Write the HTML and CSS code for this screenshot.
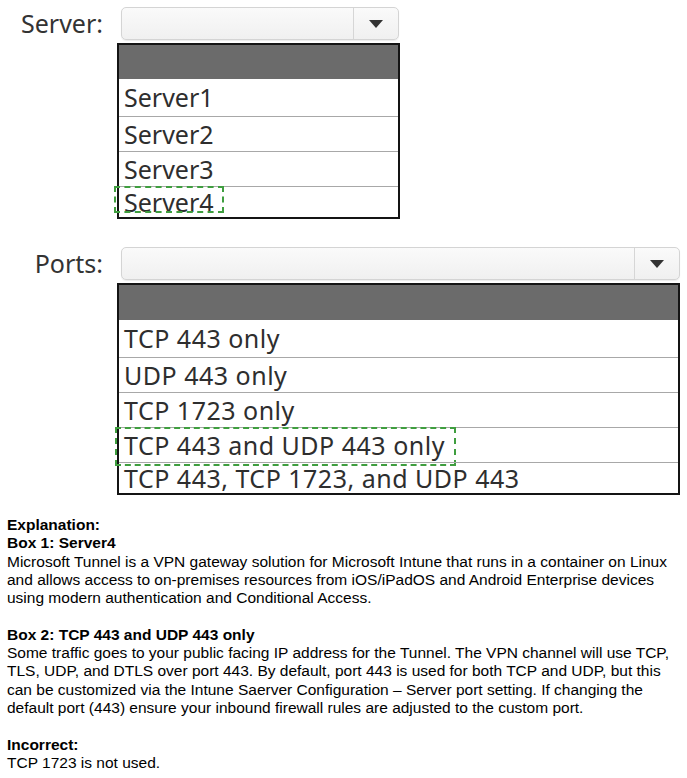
FILE: index.html
```html
<!DOCTYPE html>
<html>
<head>
<meta charset="utf-8">
<link rel="stylesheet" href="styles.css">
</head>
<body>
<div class="page">
  <section class="field server">
    <div class="label">Server:</div>
    <div class="control">
      <div class="select">
        <div class="select-value"></div>
        <div class="select-btn"><svg width="14" height="8" viewBox="0 0 14 8"><path d="M0 0H14L7 8Z" fill="#333"/></svg></div>
      </div>
      <div class="listbox">
        <div class="lb-head"></div>
        <div class="lb-row">Server1</div>
        <div class="lb-row">Server2</div>
        <div class="lb-row">Server3</div>
        <div class="lb-row">Server4<span class="answer a1"></span></div>
      </div>
    </div>
  </section>
  <section class="field ports">
    <div class="label">Ports:</div>
    <div class="control">
      <div class="select">
        <div class="select-value"></div>
        <div class="select-btn"><svg width="14" height="8" viewBox="0 0 14 8"><path d="M0 0H14L7 8Z" fill="#333"/></svg></div>
      </div>
      <div class="listbox">
        <div class="lb-head"></div>
        <div class="lb-row">TCP 443 only</div>
        <div class="lb-row">UDP 443 only</div>
        <div class="lb-row">TCP 1723 only</div>
        <div class="lb-row">TCP 443 and UDP 443 only<span class="answer a2"></span></div>
        <div class="lb-row">TCP 443, TCP 1723, and UDP 443</div>
      </div>
    </div>
  </section>
  <div class="explain">
    <p><b>Explanation:</b><br><b>Box 1: Server4</b><br>Microsoft Tunnel is a VPN gateway solution for Microsoft Intune that runs in a container on Linux<br>and allows access to on-premises resources from iOS/iPadOS and Android Enterprise devices<br>using modern authentication and Conditional Access.</p>
    <p><b>Box 2: TCP 443 and UDP 443 only</b><br>Some traffic goes to your public facing IP address for the Tunnel. The VPN channel will use TCP,<br>TLS, UDP, and DTLS over port 443. By default, port 443 is used for both TCP and UDP, but this<br>can be customized via the Intune Saerver Configuration – Server port setting. If changing the<br>default port (443) ensure your inbound firewall rules are adjusted to the custom port.</p>
    <p><b>Incorrect:</b><br>TCP 1723 is not used.</p>
  </div>
</div>
</body>
</html>
```
FILE: styles.css
```css
html, body { margin: 0; padding: 0; background: #fff; }
.page { width: 687px; }
.field { display: flex; align-items: flex-start; }
.field.server { padding-top: 7px; }
.field.ports { padding-top: 28px; }
.label {
  width: 103px; text-align: right;
  font-family: "Noto Sans", sans-serif; font-size: 25px; color: #333;
  line-height: 33px;
}
.control { display: flex; flex-direction: column; margin-left: 14px; }
.select {
  margin-left: 4px; height: 31px; display: flex;
  border: 1px solid #d4d4d4; border-radius: 5px;
  background: linear-gradient(#fafafa, #f0f0f0);
  box-shadow: 0 1px 1px rgba(0,0,0,0.08);
}
.select-value { flex: 1; border-right: 1px solid #d6d6d6; }
.select-btn { width: 44px; display: flex; align-items: center; justify-content: center; }
.server .select { width: 276px; }
.ports .select { width: 557px; }
.listbox {
  margin-top: 3px; border: 2px solid #141414;
  background: #fff; display: flex; flex-direction: column;
}
.server .listbox { width: 279px; }
.ports .listbox { width: 559px; }
.lb-head { height: 35px; background: #6b6b6b; }
.server .lb-head { height: 34px; }
.lb-row {
  height: 34px; border-top: 1px solid #a8a8a8;
  font-family: "Noto Sans", sans-serif; font-size: 25px; color: #2e2e2e;
  line-height: 34px; padding-left: 5px;
  position: relative;
}
.ports .lb-row { letter-spacing: 0.5px; }
.lb-head + .lb-row { border-top: none; height: 37px; line-height: 37px; }
.lb-row:last-child { height: 30px; line-height: 30px; }
.answer {
  position: absolute;
  border: 2px dashed #3f9e3f;
  pointer-events: none;
}
.a1 { left: -5px; top: -1px; width: 106px; height: 23px; }
.a2 { left: -4px; top: -1px; width: 337px; height: 35px; }
.explain {
  margin-top: 21px; padding-left: 7px;
  font-family: "Liberation Sans", Arial, sans-serif; font-size: 15.5px;
  line-height: 18.3px; color: #000;
}
.explain p { margin: 0 0 18.3px 0; }
```
